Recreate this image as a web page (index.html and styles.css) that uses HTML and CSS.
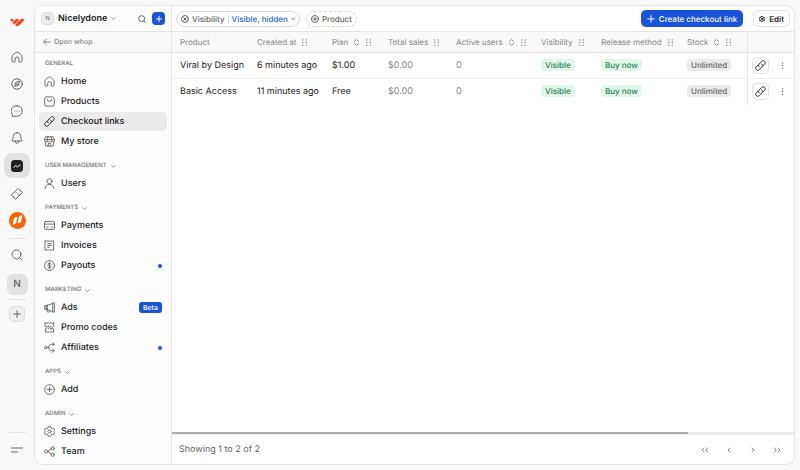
FILE: index.html
```html
<!DOCTYPE html>
<html lang="en">
<head>
<meta charset="utf-8">
<meta name="viewport" content="width=device-width, initial-scale=1">
<title>Checkout links</title>
<link rel="stylesheet" href="styles.css">
</head>
<body>
<svg class="sprite" aria-hidden="true">
  <symbol id="home" viewBox="0 0 24 24"><path d="M2 11c0-1.200.5-2.200 1.500-3l6-5a4 4 0 0 1 5 0l6 5c1 .8 1.500 1.800 1.500 3v8.500a2.500 2.500 0 0 1-2.500 2.500H17a1 1 0 0 1-1-1v-5a4 4 0 0 0-8 0v5a1 1 0 0 1-1 1H4.500A2.500 2.500 0 0 1 2 19.500z"/></symbol>
  <symbol id="compass" viewBox="0 0 24 24"><circle cx="12" cy="12" r="10.500"/><path d="M17 7l-2.300 7.700L7 17l2.300-7.700z"/><circle cx="12" cy="12" r=".7"/></symbol>
  <symbol id="chat" viewBox="0 0 24 24"><path d="M12 1.500a10.500 10.500 0 1 1 0 21H2.500a1 1 0 0 1-.8-1.600L3 19A10.500 10.500 0 0 1 12 1.500z"/><path d="M7.500 12h.1M12 12h.1M16.500 12h.1" stroke-width="2.400"/></symbol>
  <symbol id="bell" viewBox="0 0 24 24"><path d="M12 1.500a7.500 7.500 0 0 0-7.500 7.500c0 4-1 6-2.300 7.500-.6.700-.2 1.500.7 1.500h18.200c.9 0 1.300-.8.700-1.500C20.500 15 19.500 13 19.500 9A7.500 7.500 0 0 0 12 1.500zM8 18c.3 2.800 1.800 4.500 4 4.500s3.700-1.700 4-4.500"/></symbol>
  <symbol id="ticket" viewBox="0 0 24 24"><path d="M15.500 1l2.500 2.500a2.300 2.300 0 0 0 2.500 3L23 9l-5.500 5.500a2.500 2.500 0 0 0-3 3L9 23l-2.500-2.500a2.300 2.300 0 0 0-2.500-3L1 14.500zM10 8.500l1.200 1.200M14 12.500l1.200 1.200"/></symbol>
  <symbol id="search" viewBox="0 0 24 24"><circle cx="11" cy="11" r="9"/><path d="M17.500 17.500l5 5"/></symbol>
  <symbol id="plus" viewBox="0 0 24 24"><path d="M12 2v20M2 12h20"/></symbol>
  <symbol id="down" viewBox="0 0 24 24"><path d="M3 8l9 9 9-9"/></symbol>
  <symbol id="arrow" viewBox="0 0 24 24"><path d="M22 12H3M10 4l-8 8 8 8"/></symbol>
  <symbol id="bag" viewBox="0 0 24 24"><path d="M4.500 2h15l3 5v12a3 3 0 0 1-3 3h-15a3 3 0 0 1-3-3V7zM7.500 7.500a4.500 4.500 0 0 0 9 0"/></symbol>
  <symbol id="link" viewBox="0 0 24 24"><path d="M9.500 15.500a4.500 4.500 0 0 1-.5-6.800l5.800-5.800a4.450 4.450 0 0 1 6.300 6.300L17.500 12.800M14.500 8.500a4.500 4.500 0 0 1 .5 6.800l-5.800 5.800a4.450 4.450 0 0 1-6.300-6.300L6.500 11.200"/></symbol>
  <symbol id="store" viewBox="0 0 24 24"><path d="M4 1.500h16L22.800 8v2a3 3 0 0 1-5.500 1.500 3.500 3.500 0 0 1-5.300 0 3.500 3.500 0 0 1-5.300 0A3 3 0 0 1 1.200 10V8zM1.500 8h21M8.500 2L7 8v3M15.500 2L17 8v3M3 13v7a2 2 0 0 0 2 2h14a2 2 0 0 0 2-2v-7M9 22v-5.500h6V22"/></symbol>
  <symbol id="user" viewBox="0 0 24 24"><circle cx="12" cy="7" r="5.500"/><path d="M2.500 23c.5-6 4-9 9.500-9s9 3 9.500 9"/></symbol>
  <symbol id="card" viewBox="0 0 24 24"><rect x="1" y="3.500" width="22" height="17" rx="2.500"/><path d="M1 9h22M5 15.500h4M16 15.500h3"/></symbol>
  <symbol id="invoice" viewBox="0 0 24 24"><path d="M3 1.500L6 3l3-1.500L12 3l3-1.500L18 3l3-1.500v21L18 21l-3 1.500-3-1.500-3 1.500L6 21l-3 1.500zM8 8h8M8 12h8M8 16h4"/></symbol>
  <symbol id="dollar" viewBox="0 0 24 24"><circle cx="12" cy="12" r="10.800"/><path d="M15.500 9c-.5-1.300-1.700-2-3.500-2-2 0-3.300.9-3.300 2.400 0 3.600 6.800 1.600 6.800 5.200 0 1.500-1.400 2.400-3.500 2.400-1.900 0-3.200-.8-3.700-2.200M12 5v14"/></symbol>
  <symbol id="ads" viewBox="0 0 24 24"><path d="M8 7l11-4v18L8 17zM8 7H5v10h3M19 2h3.500v20H19M5 8H1.500v8H5M7 17v4a1 1 0 0 0 1 1h3a1 1 0 0 0 1-1v-2"/></symbol>
  <symbol id="promo" viewBox="0 0 24 24"><path d="M3 1.500L6 3l3-1.500L12 3l3-1.500L18 3l3-1.500V9a3 3 0 0 0 0 6v7.500L18 21l-3 1.500-3-1.500-3 1.500L6 21l-3 1.500V15a3 3 0 0 0 0-6zM15.500 8.500l-7 7"/><circle cx="9" cy="9" r="1"/><circle cx="15" cy="15" r="1"/></symbol>
  <symbol id="affiliate" viewBox="0 0 24 24"><circle cx="4" cy="12" r="3"/><path d="M7 12h3.500M10.500 12C10.500 7 12.500 5 16 5h6M19 1.500L22.500 5 19 8.500M10.500 12c0 5 2 7 5.500 7h6M19 15.500l3.500 3.500-3.500 3.500"/></symbol>
  <symbol id="add" viewBox="0 0 24 24"><circle cx="12" cy="12" r="10.500"/><path d="M12 7v10M7 12h10"/></symbol>
  <symbol id="remove" viewBox="0 0 24 24"><circle cx="12" cy="12" r="10.500"/><path d="M8 8l8 8M16 8l-8 8"/></symbol>
  <symbol id="gear" viewBox="0 0 24 24"><path d="M9.500 1.500h5l1.200 3 2 1.200 3.200-.5L23.300 9.500 21.300 12l2 2.500-2.400 4.300-3.200-.5-2 1.200-1.200 3h-5l-1.200-3-2-1.200-3.200.5L.7 14.500l2-2.500-2-2.500 2.400-4.300 3.200.5 2-1.200z"/><circle cx="12" cy="12" r="3.500"/></symbol>
  <symbol id="team" viewBox="0 0 24 24"><circle cx="4.500" cy="12" r="3.500"/><circle cx="19" cy="5" r="3.500"/><circle cx="19" cy="19" r="3.500"/><path d="M8 12h1c3 0 2.500-6.500 6.500-6.500M9 12c3 0 2.500 6.500 6.500 6.500"/></symbol>
  <symbol id="sort" viewBox="0 0 24 24"><path d="M4 9l8-7 8 7M4 15l8 7 8-7"/></symbol>
  <symbol id="grip" viewBox="0 0 24 24"><path d="M6 3h.1M18 3h.1M6 12h.1M18 12h.1M6 21h.1M18 21h.1" stroke-width="5"/></symbol>
  <symbol id="dots" viewBox="0 0 24 24"><path d="M12 3h.1M12 12h.1M12 21h.1" stroke-width="5"/></symbol>
  <symbol id="prev" viewBox="0 0 24 24"><path d="M15 6l-6 6 6 6"/></symbol>
  <symbol id="next" viewBox="0 0 24 24"><path d="M9 6l6 6-6 6"/></symbol>
  <symbol id="first" viewBox="0 0 24 24"><path d="M9 6l-6 6 6 6M20 6l-6 6 6 6"/></symbol>
  <symbol id="last" viewBox="0 0 24 24"><path d="M4 6l6 6-6 6M15 6l6 6-6 6"/></symbol>
</svg>
<div class="app">
  <nav class="rail" aria-label="Workspace">
    <a class="logo" href="#" aria-label="Whop"><svg viewBox="0 0 30 16"><path d="M0 4q4-5 8 0L4 8zM10 4q4-5 8 0L9 13 5 9zM20 4q4-5 9 0L18 15q-3 2-7 0l-1-1z"/></svg></a>
    <a class="rail-item" href="#" aria-label="Home"><svg class="icon rail-icon"><use href="#home"/></svg></a>
    <a class="rail-item" href="#" aria-label="Discover"><svg class="icon rail-icon"><use href="#compass"/></svg></a>
    <a class="rail-item" href="#" aria-label="Messages"><svg class="icon rail-icon"><use href="#chat"/></svg></a>
    <a class="rail-item" href="#" aria-label="Notifications"><svg class="icon rail-icon"><use href="#bell"/></svg></a>
    <a class="rail-item current" href="#" aria-label="Dashboard"><svg class="chart" viewBox="0 0 24 24"><rect width="24" height="24" rx="7"/><path d="M5 15l4.500-4 3.500 3 6-5"/></svg></a>
    <a class="rail-item" href="#" aria-label="Offers"><svg class="icon rail-icon"><use href="#ticket"/></svg></a>
    <a class="rail-item" href="#" aria-label="Community"><svg class="brand" viewBox="0 0 34 34"><circle cx="17" cy="17" r="17"/><path d="M7 25l3-12q1-3 4-3h3l-3 12q-1 3-4 3zM17 22l3-12q1-3 4-3h3l-3 12q-1 3-4 3z"/></svg></a>
    <hr>
    <button class="rail-search" aria-label="Search"><svg class="icon rail-icon"><use href="#search"/></svg></button>
    <a class="rail-avatar" href="#">N</a>
    <hr>
    <button class="rail-add" aria-label="Add"><svg class="icon small"><use href="#plus"/></svg></button>
    <hr class="push">
    <button class="rail-menu" aria-label="Menu"><svg class="icon rail-icon" viewBox="0 0 24 24"><path d="M1 8h22M1 16h12"/></svg></button>
  </nav>
  <div class="panel">
    <aside class="sidebar">
      <header class="bar company">
        <span class="avatar">N</span>
        <button class="switcher">Nicelydone <svg class="icon tiny"><use href="#down"/></svg></button>
        <button class="find" aria-label="Search"><svg class="icon small"><use href="#search"/></svg></button>
        <button class="new" aria-label="New"><svg class="icon mini"><use href="#plus"/></svg></button>
      </header>
      <a class="back" href="#"><svg class="icon small"><use href="#arrow"/></svg>Open whop</a>
      <nav class="menu" aria-label="Dashboard">
        <h2>General</h2>
        <a href="#"><svg class="icon"><use href="#home"/></svg>Home</a>
        <a href="#"><svg class="icon"><use href="#bag"/></svg>Products</a>
        <a class="active" href="#"><svg class="icon"><use href="#link"/></svg>Checkout links</a>
        <a href="#"><svg class="icon"><use href="#store"/></svg>My store</a>
        <h2>User management <svg class="icon tiny"><use href="#down"/></svg></h2>
        <a href="#"><svg class="icon"><use href="#user"/></svg>Users</a>
        <h2>Payments <svg class="icon tiny"><use href="#down"/></svg></h2>
        <a href="#"><svg class="icon"><use href="#card"/></svg>Payments</a>
        <a href="#"><svg class="icon"><use href="#invoice"/></svg>Invoices</a>
        <a href="#"><svg class="icon"><use href="#dollar"/></svg>Payouts<span class="dot"></span></a>
        <h2>Marketing <svg class="icon tiny"><use href="#down"/></svg></h2>
        <a href="#"><svg class="icon"><use href="#ads"/></svg>Ads<span class="beta">Beta</span></a>
        <a href="#"><svg class="icon"><use href="#promo"/></svg>Promo codes</a>
        <a href="#"><svg class="icon"><use href="#affiliate"/></svg>Affiliates<span class="dot"></span></a>
        <h2>Apps <svg class="icon tiny"><use href="#down"/></svg></h2>
        <a href="#"><svg class="icon"><use href="#add"/></svg>Add</a>
        <h2>Admin <svg class="icon tiny"><use href="#down"/></svg></h2>
        <a href="#"><svg class="icon"><use href="#gear"/></svg>Settings</a>
        <a href="#"><svg class="icon"><use href="#team"/></svg>Team</a>
      </nav>
    </aside>
    <main class="content">
      <header class="bar toolbar">
        <button class="chip"><svg class="icon small"><use href="#remove"/></svg>Visibility<span class="value">Visible, hidden</span><svg class="icon caret"><use href="#down"/></svg></button>
        <button class="chip dashed"><svg class="icon small"><use href="#add"/></svg>Product</button>
        <button class="create"><svg class="icon small"><use href="#plus"/></svg>Create checkout link</button>
        <button class="edit"><svg class="icon mini"><use href="#gear"/></svg>Edit</button>
      </header>
      <table>
        <colgroup><col class="c-product"><col class="c-created"><col class="c-plan"><col class="c-sales"><col class="c-users"><col class="c-visibility"><col class="c-release"><col class="c-stock"><col class="c-actions"></colgroup>
        <thead>
          <tr>
            <th>Product</th>
            <th><div class="head">Created at<svg class="icon grip"><use href="#grip"/></svg></div></th>
            <th><div class="head">Plan<svg class="icon sort"><use href="#sort"/></svg><svg class="icon grip"><use href="#grip"/></svg></div></th>
            <th><div class="head">Total sales<svg class="icon grip"><use href="#grip"/></svg></div></th>
            <th><div class="head">Active users<svg class="icon sort"><use href="#sort"/></svg><svg class="icon grip"><use href="#grip"/></svg></div></th>
            <th><div class="head">Visibility<svg class="icon grip"><use href="#grip"/></svg></div></th>
            <th><div class="head">Release method<svg class="icon grip"><use href="#grip"/></svg></div></th>
            <th><div class="head">Stock<svg class="icon sort"><use href="#sort"/></svg><svg class="icon grip"><use href="#grip"/></svg></div></th>
            <th class="actions" aria-label="Actions"></th>
          </tr>
        </thead>
        <tbody>
          <tr>
            <td>Viral by Design</td><td>6 minutes ago</td><td>$1.00</td><td class="muted">$0.00</td><td class="muted">0</td>
            <td><span class="tag green">Visible</span></td><td><span class="tag green">Buy now</span></td><td><span class="tag">Unlimited</span></td>
            <td class="actions"><div class="tools"><button class="copy" aria-label="Copy link"><svg class="icon"><use href="#link"/></svg></button><button class="more" aria-label="More"><svg class="icon grip"><use href="#dots"/></svg></button></div></td>
          </tr>
          <tr>
            <td>Basic Access</td><td>11 minutes ago</td><td>Free</td><td class="muted">$0.00</td><td class="muted">0</td>
            <td><span class="tag green">Visible</span></td><td><span class="tag green">Buy now</span></td><td><span class="tag">Unlimited</span></td>
            <td class="actions"><div class="tools"><button class="copy" aria-label="Copy link"><svg class="icon"><use href="#link"/></svg></button><button class="more" aria-label="More"><svg class="icon grip"><use href="#dots"/></svg></button></div></td>
          </tr>
        </tbody>
      </table>
      <div class="track"><div class="thumb"></div></div>
      <footer>
        <span>Showing 1 to 2 of 2</span>
        <div class="pager">
          <button aria-label="First page"><svg class="icon small"><use href="#first"/></svg></button>
          <button aria-label="Previous page"><svg class="icon small"><use href="#prev"/></svg></button>
          <button aria-label="Next page"><svg class="icon small"><use href="#next"/></svg></button>
          <button aria-label="Last page"><svg class="icon small"><use href="#last"/></svg></button>
        </div>
      </footer>
    </main>
  </div>
</div>
</body>
</html>
```

FILE: styles.css
```css
* { box-sizing: border-box; }
body {
  margin: 0;
  background: #f9f9f9;
  color: #202020;
  font: 9px/12px Inter, "Liberation Sans", sans-serif;
  text-rendering: geometricPrecision;
}
a { color: inherit; text-decoration: none; }
button {
  display: flex;
  align-items: center;
  justify-content: center;
  margin: 0;
  padding: 0;
  border: 0;
  background: none;
  color: inherit;
  font: inherit;
  text-rendering: inherit;
  white-space: nowrap;
}
.sprite { position: absolute; width: 0; height: 0; }
.icon {
  flex: none;
  width: 11px;
  height: 11px;
  fill: none;
  stroke: currentColor;
  stroke-width: 2;
  stroke-linecap: round;
  stroke-linejoin: round;
}
.icon.rail-icon { width: 12px; height: 12px; }
.icon.small { width: 8px; height: 8px; stroke-width: 3; }
.icon.mini { width: 6px; height: 6px; stroke-width: 4; }
.icon.tiny { width: 5px; height: 5px; stroke-width: 4; }
.icon.caret { width: 4px; height: 4px; stroke-width: 5; }

.app { display: flex; min-height: 100vh; }

.rail {
  display: flex;
  flex-direction: column;
  align-items: center;
  width: 34px;
  padding: 14px 0 7px;
  color: #646464;
}
.logo { height: 29px; padding-top: 4px; }
.logo svg { display: block; width: 15px; height: 8px; fill: #fa4616; }
.rail-item {
  display: flex;
  align-items: center;
  justify-content: center;
  width: 26px;
  height: 27px;
}
.rail-item.current {
  height: 25px;
  margin: 2px 0;
  border-radius: 8px;
  background: #e2e2e2;
}
.chart { width: 12px; height: 12px; fill: #202020; }
.chart path { fill: none; stroke: #fff; stroke-width: 2; }
.brand { width: 17px; height: 17px; fill: #fa6400; }
.brand path { fill: #fff; }
.rail hr { width: 17px; height: 1px; margin: 4px 0; border: 0; background: #e2e2e2; }
.rail-search { width: 26px; height: 24px; margin-bottom: 7px; }
.rail-avatar {
  width: 21px;
  border-radius: 6px;
  background: #e2e2e2;
  font-size: 10px;
  font-weight: 500;
  line-height: 21px;
  text-align: center;
}
.rail-add {
  width: 16px;
  height: 16px;
  margin-top: 2px;
  border: 1px solid #dcdcdc;
  border-radius: 5px;
  background: #f0f0f0;
}
.rail .push { margin-top: auto; }
.rail-menu { width: 26px; height: 26px; }

.panel {
  display: flex;
  flex: 1;
  min-width: 0;
  margin: 5px 5px 5px 0;
  overflow: hidden;
  border: 1px solid #e4e4e4;
  border-radius: 9px;
  background: #fff;
}
.bar {
  display: flex;
  align-items: center;
  height: 26px;
  border-bottom: 1px solid #e4e4e4;
}

.sidebar {
  flex: none;
  width: 137px;
  border-right: 1px solid #e4e4e4;
  background: #fdfdfd;
}
.company { padding: 0 6px; }
.avatar {
  width: 13px;
  margin-right: 4px;
  border: 1px solid #dcdcdc;
  border-radius: 4px;
  background: #ececec;
  color: #646464;
  font-size: 6px;
  line-height: 11px;
  text-align: center;
}
.switcher { gap: 4px; color: #202020; font-weight: 600; }
.switcher .icon { color: #838383; }
.find { margin-left: auto; margin-right: 6px; color: #646464; }
.new { width: 13px; height: 13px; border-radius: 4px; background: #1754d8; color: #fff; }
.back {
  display: flex;
  align-items: center;
  gap: 3px;
  height: 21px;
  padding-left: 8px;
  border-bottom: 1px solid #e4e4e4;
  background: #f9f9f9;
  color: #838383;
  font-size: 7px;
  font-weight: 500;
}
.menu { padding: 0 4px; }
.menu h2 {
  display: flex;
  align-items: center;
  gap: 4px;
  height: 22px;
  margin: 0;
  padding: 6px 6px 0;
  color: #838383;
  font-size: 6px;
  font-weight: 600;
  text-transform: uppercase;
}
.menu h2:first-child { height: 19px; padding-top: 2px; }
.menu a {
  display: flex;
  align-items: center;
  gap: 6px;
  height: 19px;
  margin-bottom: 1px;
  padding: 0 5px;
  border-radius: 5px;
  font-weight: 500;
}
.menu a .icon { color: #646464; }
.menu .active { background: #ebebeb; }
.menu .active .icon { color: #202020; }
.dot { width: 4px; height: 4px; margin-left: auto; border-radius: 50%; background: #1754d8; }
.beta {
  margin-left: auto;
  padding: 0 4px;
  border-radius: 3px;
  background: #1754d8;
  color: #fff;
  font-size: 7px;
  line-height: 11px;
}

.content { display: flex; flex: 1; flex-direction: column; min-width: 0; }
.toolbar { gap: 6px; padding: 0 4px; }
.chip {
  gap: 3px;
  height: 16px;
  padding: 0 4px;
  border: 1px solid #d9d9d9;
  border-radius: 8px;
  color: #646464;
  font-size: 8px;
  font-weight: 500;
}
.chip.dashed { border-style: dashed; }
.value { padding-left: 3px; border-left: 1px solid #d9d9d9; color: #1f5fe0; line-height: 8px; }
.create {
  gap: 4px;
  height: 17px;
  margin-left: auto;
  padding: 0 6px;
  border-radius: 5px;
  background: #1754d8;
  color: #fff;
  font-size: 8px;
  font-weight: 500;
}
.edit {
  gap: 4px;
  height: 17px;
  margin-left: 4px;
  padding: 0 5px;
  border: 1px solid #e0e0e0;
  border-radius: 5px;
  font-size: 8px;
  font-weight: 600;
}

table { width: 100%; border-collapse: separate; border-spacing: 0; table-layout: fixed; }
.c-product { width: 77px; }
.c-created { width: 75px; }
.c-plan { width: 56px; }
.c-sales { width: 68px; }
.c-users { width: 85px; }
.c-visibility { width: 60px; }
.c-release { width: 86px; }
.c-stock { width: 68px; }
.c-actions { width: 47px; }
th, td { padding: 0 0 0 8px; text-align: left; white-space: nowrap; }
th {
  height: 21px;
  border-bottom: 1px solid #e4e4e4;
  background: #f9f9f9;
  color: #838383;
  font-size: 8px;
  font-weight: 400;
}
td { height: 26px; border-bottom: 1px solid #f2f2f2; }
tr:last-child td { border-bottom-color: transparent; }
.head { display: flex; align-items: center; gap: 5px; }
.icon.grip { width: 7px; height: 7px; }
.icon.sort { width: 7px; height: 7px; stroke-width: 3; }
.muted { color: #838383; }
.tag {
  display: inline-block;
  padding: 0 4px;
  border-radius: 4px;
  background: #ebebeb;
  color: #646464;
  font-size: 8px;
  font-weight: 500;
  vertical-align: middle;
}
.tag.green { background: #e3f6ea; color: #218358; }
.actions { padding-left: 4px; border-left: 1px solid #e4e4e4; }
.tools { display: flex; align-items: center; gap: 8px; }
.copy { width: 17px; height: 17px; border: 1px solid #e0e0e0; border-radius: 5px; }
.more { width: 10px; height: 17px; color: #646464; }

.track { height: 3px; margin-top: auto; background: #ececec; }
.thumb { width: 83%; height: 2px; background: #adadad; }
footer {
  display: flex;
  align-items: center;
  justify-content: space-between;
  height: 29px;
  padding: 0 13px 0 7px;
  color: #646464;
}
.pager { display: flex; gap: 16px; color: #838383; }
.pager button { width: 8px; height: 12px; }
```
